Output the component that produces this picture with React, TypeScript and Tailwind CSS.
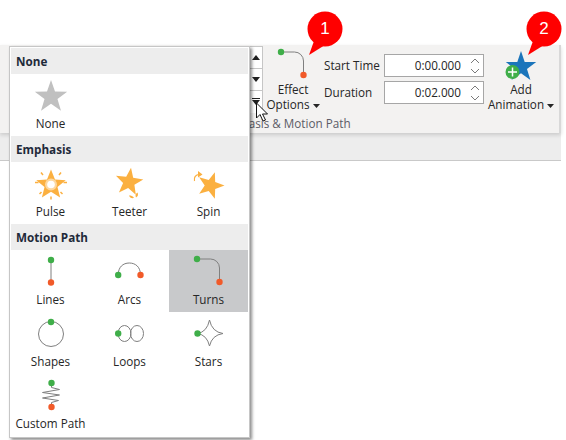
import type { ReactNode } from "react";

const font = { fontFamily: '"Open Sans", "Noto Sans", sans-serif' };

// five pointed star, rot in degrees
const star = (cx: number, cy: number, R: number, r: number, rot = 0) => {
  const pts: string[] = [];
  for (let i = 0; i < 10; i++) {
    const rad = i % 2 === 0 ? R : r;
    const a = ((-90 + rot + i * 36) * Math.PI) / 180;
    pts.push(`${(cx + rad * Math.cos(a)).toFixed(2)},${(cy + rad * Math.sin(a)).toFixed(2)}`);
  }
  return pts.join(" ");
};

const GREEN = "#3fae49";
const ORANGE = "#f15a29";
const LINE = "#7f7f7f";
const AMBER = "#fbb040";

const Icon = ({ children }: { children: ReactNode }) => (
  <svg width="36" height="36" viewBox="0 0 36 36" fill="none">
    {children}
  </svg>
);

const Dot = ({ x, y, c }: { x: number; y: number; c: string }) => <circle cx={x} cy={y} r="3.2" fill={c} />;

const NoneIcon = () => (
  <Icon>
    <polygon points={star(18, 19, 17, 6.8)} fill="#c0c0c0" />
  </Icon>
);

const PulseIcon = () => (
  <Icon>
    <polygon points={star(18, 19, 15.500, 6.8)} fill={AMBER} />
    <circle cx="18" cy="18.500" r="6" fill="#fff" opacity="0.5" />
    <circle cx="18" cy="18.500" r="3.800" fill="#fff" />
    <path d="M8 6.500l2 2.500M28 6.500l-2 2.500M18 30.500v3M8.500 26l-2 2M27.500 26l2 2M2 16.500h3.500M34 16.500h-3.500" stroke={AMBER} strokeWidth="1.500" />
  </Icon>
);

const TeeterIcon = () => (
  <Icon>
    <polygon points={star(17, 16, 14.500, 6, 8)} fill={AMBER} />
    <path d="M17 29.500c2 0 4 .5 5 2.500-2.500.5-4.500-.5-5-2.500zM24 31.500c-1-2-.5-4 1.500-5 1 2 .5 4-1.500 5z" fill={AMBER} />
  </Icon>
);

const SpinIcon = () => (
  <Icon>
    <polygon points={star(19.500, 19.500, 14, 5.800, 18)} fill={AMBER} />
    <path d="M3.500 15c-.8-3.500 1-6 4-6.500" stroke={AMBER} strokeWidth="1.200" />
    <path d="M7 5l4.500 3.500L7 11.500z" fill={AMBER} />
  </Icon>
);

const LinesIcon = () => (
  <Icon>
    <path d="M18 6v22.500" stroke={LINE} strokeWidth="1" />
    <Dot x={18} y={6} c={GREEN} />
    <Dot x={18} y={28.5} c={ORANGE} />
  </Icon>
);

const ArcsIcon = () => (
  <Icon>
    <path d="M6.200 21C6.200 13 11 9 17.300 9s11.200 4 11.200 12" stroke={LINE} strokeWidth="1" />
    <Dot x={6.2} y={21} c={GREEN} />
    <Dot x={28.5} y={21} c={ORANGE} />
  </Icon>
);

const TurnsIcon = () => (
  <Icon>
    <path d="M6 5h13.500a9 9 0 0 1 9 9v14" stroke={LINE} strokeWidth="1" />
    <Dot x={6} y={5} c={GREEN} />
    <Dot x={28.5} y={28} c={ORANGE} />
  </Icon>
);

const ShapesIcon = () => (
  <Icon>
    <circle cx="18" cy="18" r="12.500" stroke={LINE} strokeWidth="1" />
    <Dot x={18} y={6} c={GREEN} />
  </Icon>
);

const LoopsIcon = () => (
  <Icon>
    <ellipse cx="12.500" cy="17.500" rx="6.500" ry="8" stroke={LINE} strokeWidth="1" />
    <ellipse cx="25" cy="17.500" rx="6.500" ry="8" stroke={LINE} strokeWidth="1" />
    <Dot x={6.2} y={17.5} c={GREEN} />
  </Icon>
);

const StarsIcon = () => (
  <Icon>
    <path d="M6.500 17.500Q16 16 18.500 4 21 16 32 17.500 21 19 18.500 30 16 19 6.500 17.500z" stroke={LINE} strokeWidth="1" />
    <Dot x={6.5} y={17.5} c={GREEN} />
  </Icon>
);

const CustomIcon = () => (
  <Icon>
    <path d="M18.500 5v4.500l8 2-17 3 17 2.500-17 3 16 2.500-7 2V29" stroke={LINE} strokeWidth="1" />
    <Dot x={18.5} y={5} c={GREEN} />
    <Dot x={18.5} y={29} c={ORANGE} />
  </Icon>
);

const Tile = ({ label, icon, active }: { label: string; icon: ReactNode; active?: boolean }) => (
  <div className={`flex h-[62px] flex-col items-center pt-1 ${active ? "bg-[#c8c9cb]" : ""}`}>
    {icon}
    <span className="mt-[1px] whitespace-nowrap text-[11.7px] leading-4 text-[#262626]">{label}</span>
  </div>
);

const Section = ({ title }: { title: string }) => (
  <div className="flex h-[26px] items-center bg-[#ededed] pt-[2px] pl-[5px] text-[11.7px] font-bold text-[#1f2a3a]">{title}</div>
);

const Tri = ({ down }: { down?: boolean }) => (
  <svg width="8" height="5" viewBox="0 0 8 5">
    <path d={down ? "M0 0h8L4 5z" : "M0 5h8L4 0z"} fill="#1f1f1f" />
  </svg>
);

const Spin = () => (
  <svg width="10" height="18" viewBox="0 0 10 18" fill="none" stroke="#7a7a7a" strokeWidth="1">
    <path d="M1 6l4-4 4 4M1 12l4 4 4-4" />
  </svg>
);

const TimeInput = ({ value }: { value: string }) => (
  <div className="flex h-[23px] w-[100px] items-center justify-between border border-[#a6a6a6] bg-white pr-[3px] pl-[4px]">
    <span className="w-[72px] text-right text-[11.7px] text-[#262626]">{value}</span>
    <Spin />
  </div>
);

const Caret = () => (
  <svg className="ml-[3px] inline-block align-middle" width="7" height="4" viewBox="0 0 7 4">
    <path d="M0 0h7L3.500 4z" fill="#262626" />
  </svg>
);

const Callout = ({ n, className }: { n: number; className: string }) => (
  <div className={`absolute top-[10px] h-[46px] w-[38px] ${className}`}>
    <svg className="absolute inset-0" width="38" height="46" viewBox="0 0 38 46">
      <circle cx="19" cy="19" r="17.500" fill="#ff0000" />
      <path d="M8 31L3 45 19 35z" fill="#ff0000" />
    </svg>
    <span className="absolute top-[8px] left-0 w-[38px] text-center text-[17px] leading-[22px] font-medium text-white" style={{ fontFamily: '"Liberation Sans", sans-serif' }}>
      {n}
    </span>
  </div>
);

export default function App() {
  return (
    <div className="relative h-[440px] w-[566px] overflow-hidden bg-white" style={font}>
      <div className="h-[45px]" />

      {/* ribbon */}
      <div className="relative z-10 h-[88px] w-[561px] border-r-2 border-[#d8d8d8] bg-[#f3f2f1] shadow-[0_2px_4px_rgba(0,0,0,0.15)]">
        <div className="flex items-start text-[11.7px] text-[#262626]">
          <div className="mt-[1px] ml-[250px] flex h-[67px] w-[13px] flex-col border-r border-t border-[#c6c6c6] bg-white">
            <div className="flex h-[22px] items-center justify-center border-b border-[#c6c6c6]">
              <Tri />
            </div>
            <div className="flex h-[22px] items-center justify-center border-b border-[#c6c6c6]">
              <Tri down />
            </div>
            <div className="flex h-[22px] flex-col items-center pt-[7px]">
              <div className="mb-[1px] h-[1px] w-[8px] bg-[#1f1f1f]" />
              <Tri down />
            </div>
          </div>

          <div className="flex w-[60px] flex-col items-center pt-[2px] leading-[15px]">
            <TurnsIcon />
            <span className="mt-[-1px]">Effect</span>
            <span className="whitespace-nowrap">
              Options
              <Caret />
            </span>
          </div>

          <div className="ml-[1px] grid grid-cols-[60px_100px] gap-y-[4px] pt-[9px]">
            <span className="self-center">Start Time</span>
            <TimeInput value="0:00.000" />
            <span className="self-center">Duration</span>
            <TimeInput value="0:02.000" />
          </div>

          <div className="ml-[2px] flex w-[70px] flex-col items-center pt-[4px] leading-[15px]">
            <svg width="36" height="33" viewBox="0 0 36 33">
              <polygon points={star(18, 18, 16, 6.3)} fill="#1b75bb" />
              <circle cx="9.500" cy="23" r="7" fill={GREEN} />
              <path d="M9.500 18.500v9M5 23h9" stroke="#fff" strokeWidth="1.500" />
            </svg>
            <span>Add</span>
            <span className="whitespace-nowrap">
              Animation
              <Caret />
            </span>
          </div>
        </div>
        <div className="mt-[2px] pl-[217px] text-[11.7px] leading-4 whitespace-nowrap text-[#5c5c66]">Emphasis &amp; Motion Path</div>
      </div>

      <div className="h-[28px] w-[561px] border-b border-[#c9c9c9] bg-[#ededed]" />

      {/* cursor on top of gallery button */}
      <svg className="absolute top-[102px] left-[255px] z-20" width="14" height="21" viewBox="0 0 14 21">
        <path d="M1.500 1v15l3.500-3.500 3 6.500 2.500-1-3-6h5z" fill="#fff" stroke="#111" strokeWidth="1" />
      </svg>

      <Callout n={1} className="left-[306px] z-20" />
      <Callout n={2} className="left-[525px] z-20" />

      {/* animation dropdown */}
      <div className="absolute top-[46px] left-[9px] z-30 w-[241px] border border-[#c6c6c6] bg-white p-[1px] shadow-[2px_2px_3px_rgba(0,0,0,0.45)]">
        <Section title="None" />
        <div className="grid grid-cols-3">
          <Tile label="None" icon={<NoneIcon />} />
        </div>
        <Section title="Emphasis" />
        <div className="grid grid-cols-3">
          <Tile label="Pulse" icon={<PulseIcon />} />
          <Tile label="Teeter" icon={<TeeterIcon />} />
          <Tile label="Spin" icon={<SpinIcon />} />
        </div>
        <Section title="Motion Path" />
        <div className="grid grid-cols-3">
          <Tile label="Lines" icon={<LinesIcon />} />
          <Tile label="Arcs" icon={<ArcsIcon />} />
          <Tile label="Turns" icon={<TurnsIcon />} active />
          <Tile label="Shapes" icon={<ShapesIcon />} />
          <Tile label="Loops" icon={<LoopsIcon />} />
          <Tile label="Stars" icon={<StarsIcon />} />
          <Tile label="Custom Path" icon={<CustomIcon />} />
        </div>
      </div>
    </div>
  );
}
